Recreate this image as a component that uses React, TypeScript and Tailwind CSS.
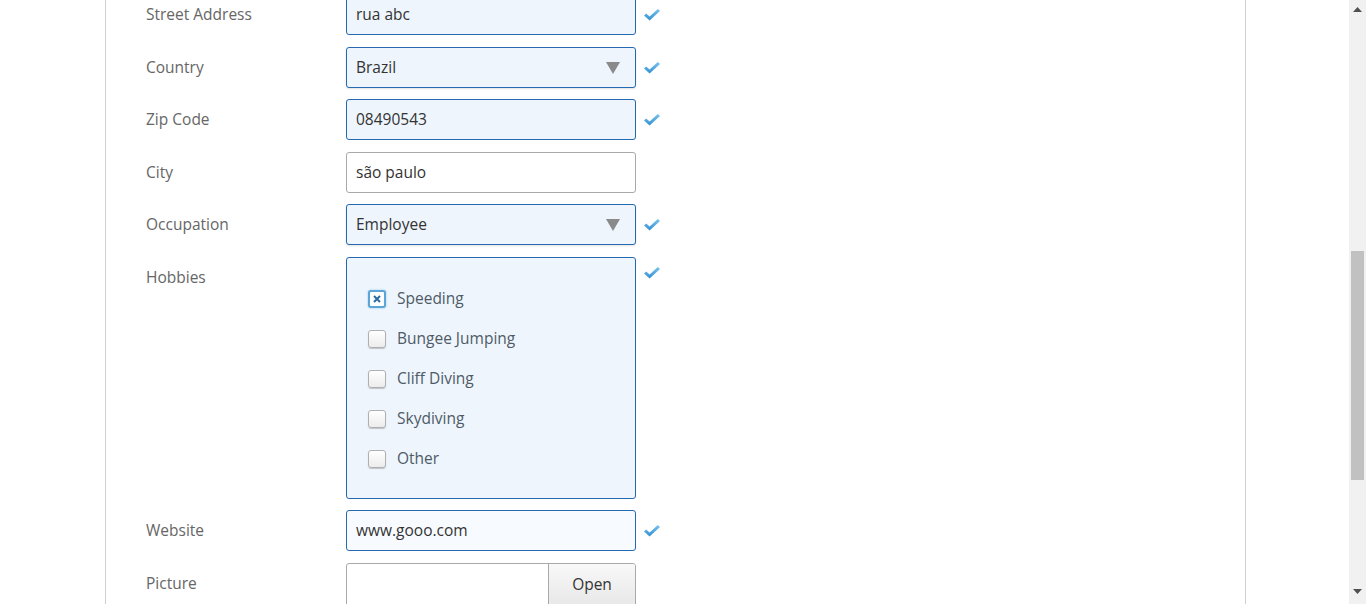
import React from "react";

const font = { fontFamily: '"Open Sans", "Liberation Sans", sans-serif' };

function Check() {
  return (
    <svg width="18" height="14" viewBox="0 0 18 14" className="shrink-0">
      <defs>
        <linearGradient id="ck" x1="0" y1="0" x2="0" y2="1">
          <stop offset="0" stopColor="#7cc4ef" />
          <stop offset="1" stopColor="#2f8fd0" />
        </linearGradient>
      </defs>
      <path d="M1 7.5 L3.2 5.6 L6.6 8.6 L14.8 1 L17 3 L6.6 12.6 Z" fill="url(#ck)" />
    </svg>
  );
}

function Arrow() {
  return (
    <svg width="14" height="12" viewBox="0 0 14 12" className="absolute right-[15px] top-[14px]">
      <path d="M0 0 H14 L7 12 Z" fill="#8a8a8a" />
    </svg>
  );
}

function Row({ label, children, check, checkTop = "mt-[14px]" }: { label: string; children: React.ReactNode; check?: boolean; checkTop?: string }) {
  return (
    <div className="flex items-start">
      <div className="w-[200px] pt-[10px] text-[15.5px] leading-[20px] text-[#666]">{label}</div>
      <div className="w-[290px]">{children}</div>
      <div className={`ml-[7px] ${checkTop}`}>{check ? <Check /> : null}</div>
    </div>
  );
}

const valid = "h-[41px] rounded-[3px] border border-[#2569b0] bg-[#eef5fd] px-[9px] pt-[1px] flex items-center text-[15.5px] text-[#333]";

function Box({ checked, label }: { checked?: boolean; label: string }) {
  return (
    <div className="flex items-center h-[40px]">
      {checked ? (
        <div className="w-[18px] h-[18px] rounded-[3px] border-2 border-[#5ba6d6] bg-white flex items-center justify-center shadow-[0_0_2px_#8cc4ea]">
          <svg width="8" height="8" viewBox="0 0 8 8">
            <path d="M1 1 L7 7 M7 1 L1 7" stroke="#2a6aa6" strokeWidth="2" />
          </svg>
        </div>
      ) : (
        <div className="w-[18px] h-[18px] rounded-[3px] border border-[#b0b0b0] bg-gradient-to-b from-white to-[#ececec] shadow-[0_1px_1px_rgba(0,0,0,0.2)]" />
      )}
      <span className="ml-[11px] text-[15.5px] text-[#4f5b66]">{label}</span>
    </div>
  );
}

export default function App() {
  return (
    <div className="flex h-[604px] overflow-hidden bg-white" style={font}>
      <div className="flex-1 overflow-hidden">
        <div className="ml-[105px] w-[1141px] h-[604px] border-x border-[#d0d0d0] pl-[40px] flex flex-col">
          <div className="-mt-[6px] flex flex-col gap-[11.5px]">
            <Row label="Street Address" check>
              <div className={valid}>rua abc</div>
            </Row>
            <Row label="Country" check>
              <div className={`${valid} relative shadow-[0_1px_2px_rgba(0,0,0,0.12)]`}>
                Brazil
                <Arrow />
              </div>
            </Row>
            <Row label="Zip Code" check>
              <div className={valid}>08490543</div>
            </Row>
            <Row label="City">
              <div className="h-[41px] rounded-[3px] border border-[#a9a9a9] bg-white px-[9px] pt-[1px] flex items-center text-[15.5px] text-[#333]">
                são paulo
              </div>
            </Row>
            <Row label="Occupation" check>
              <div className={`${valid} relative shadow-[0_1px_2px_rgba(0,0,0,0.12)]`}>
                Employee
                <Arrow />
              </div>
            </Row>
            <Row label="Hobbies" check checkTop="mt-[9px]">
              <div className="h-[242px] rounded-[3px] border border-[#2569b0] bg-[#eef5fd] pl-[21px] pt-[21px]">
                <Box checked label="Speeding" />
                <Box label="Bungee Jumping" />
                <Box label="Cliff Diving" />
                <Box label="Skydiving" />
                <Box label="Other" />
              </div>
            </Row>
            <Row label="Website" check>
              <div className="h-[41px] rounded-[3px] border border-[#2569b0] bg-[#f7fbff] px-[9px] pt-[1px] flex items-center text-[15.5px] text-[#333]">
                www.gooo.com
              </div>
            </Row>
            <Row label="Picture">
              <div className="h-[48px] rounded-[3px] border border-[#a9a9a9] bg-white flex overflow-hidden">
                <div className="flex-1" />
                <div className="w-[87px] border-l border-[#a9a9a9] bg-gradient-to-b from-[#f8f8f8] to-[#e6e6e6] flex items-start pt-[9px] justify-center text-[15.5px] text-[#333]">
                  Open
                </div>
              </div>
            </Row>
          </div>
        </div>
      </div>
      <div className="w-[17px] h-[604px] bg-[#f1f1f1] flex flex-col items-center">
        <svg width="9" height="5" viewBox="0 0 9 5" className="mt-[7px]">
          <path d="M0 5 L4.5 0 L9 5 Z" fill="#505050" />
        </svg>
        <div className="mt-[239px] w-[13px] h-[229px] bg-[#c1c1c1]" />
        <svg width="9" height="5" viewBox="0 0 9 5" className="mt-[109px]">
          <path d="M0 0 L9 0 L4.5 5 Z" fill="#505050" />
        </svg>
      </div>
    </div>
  );
}
